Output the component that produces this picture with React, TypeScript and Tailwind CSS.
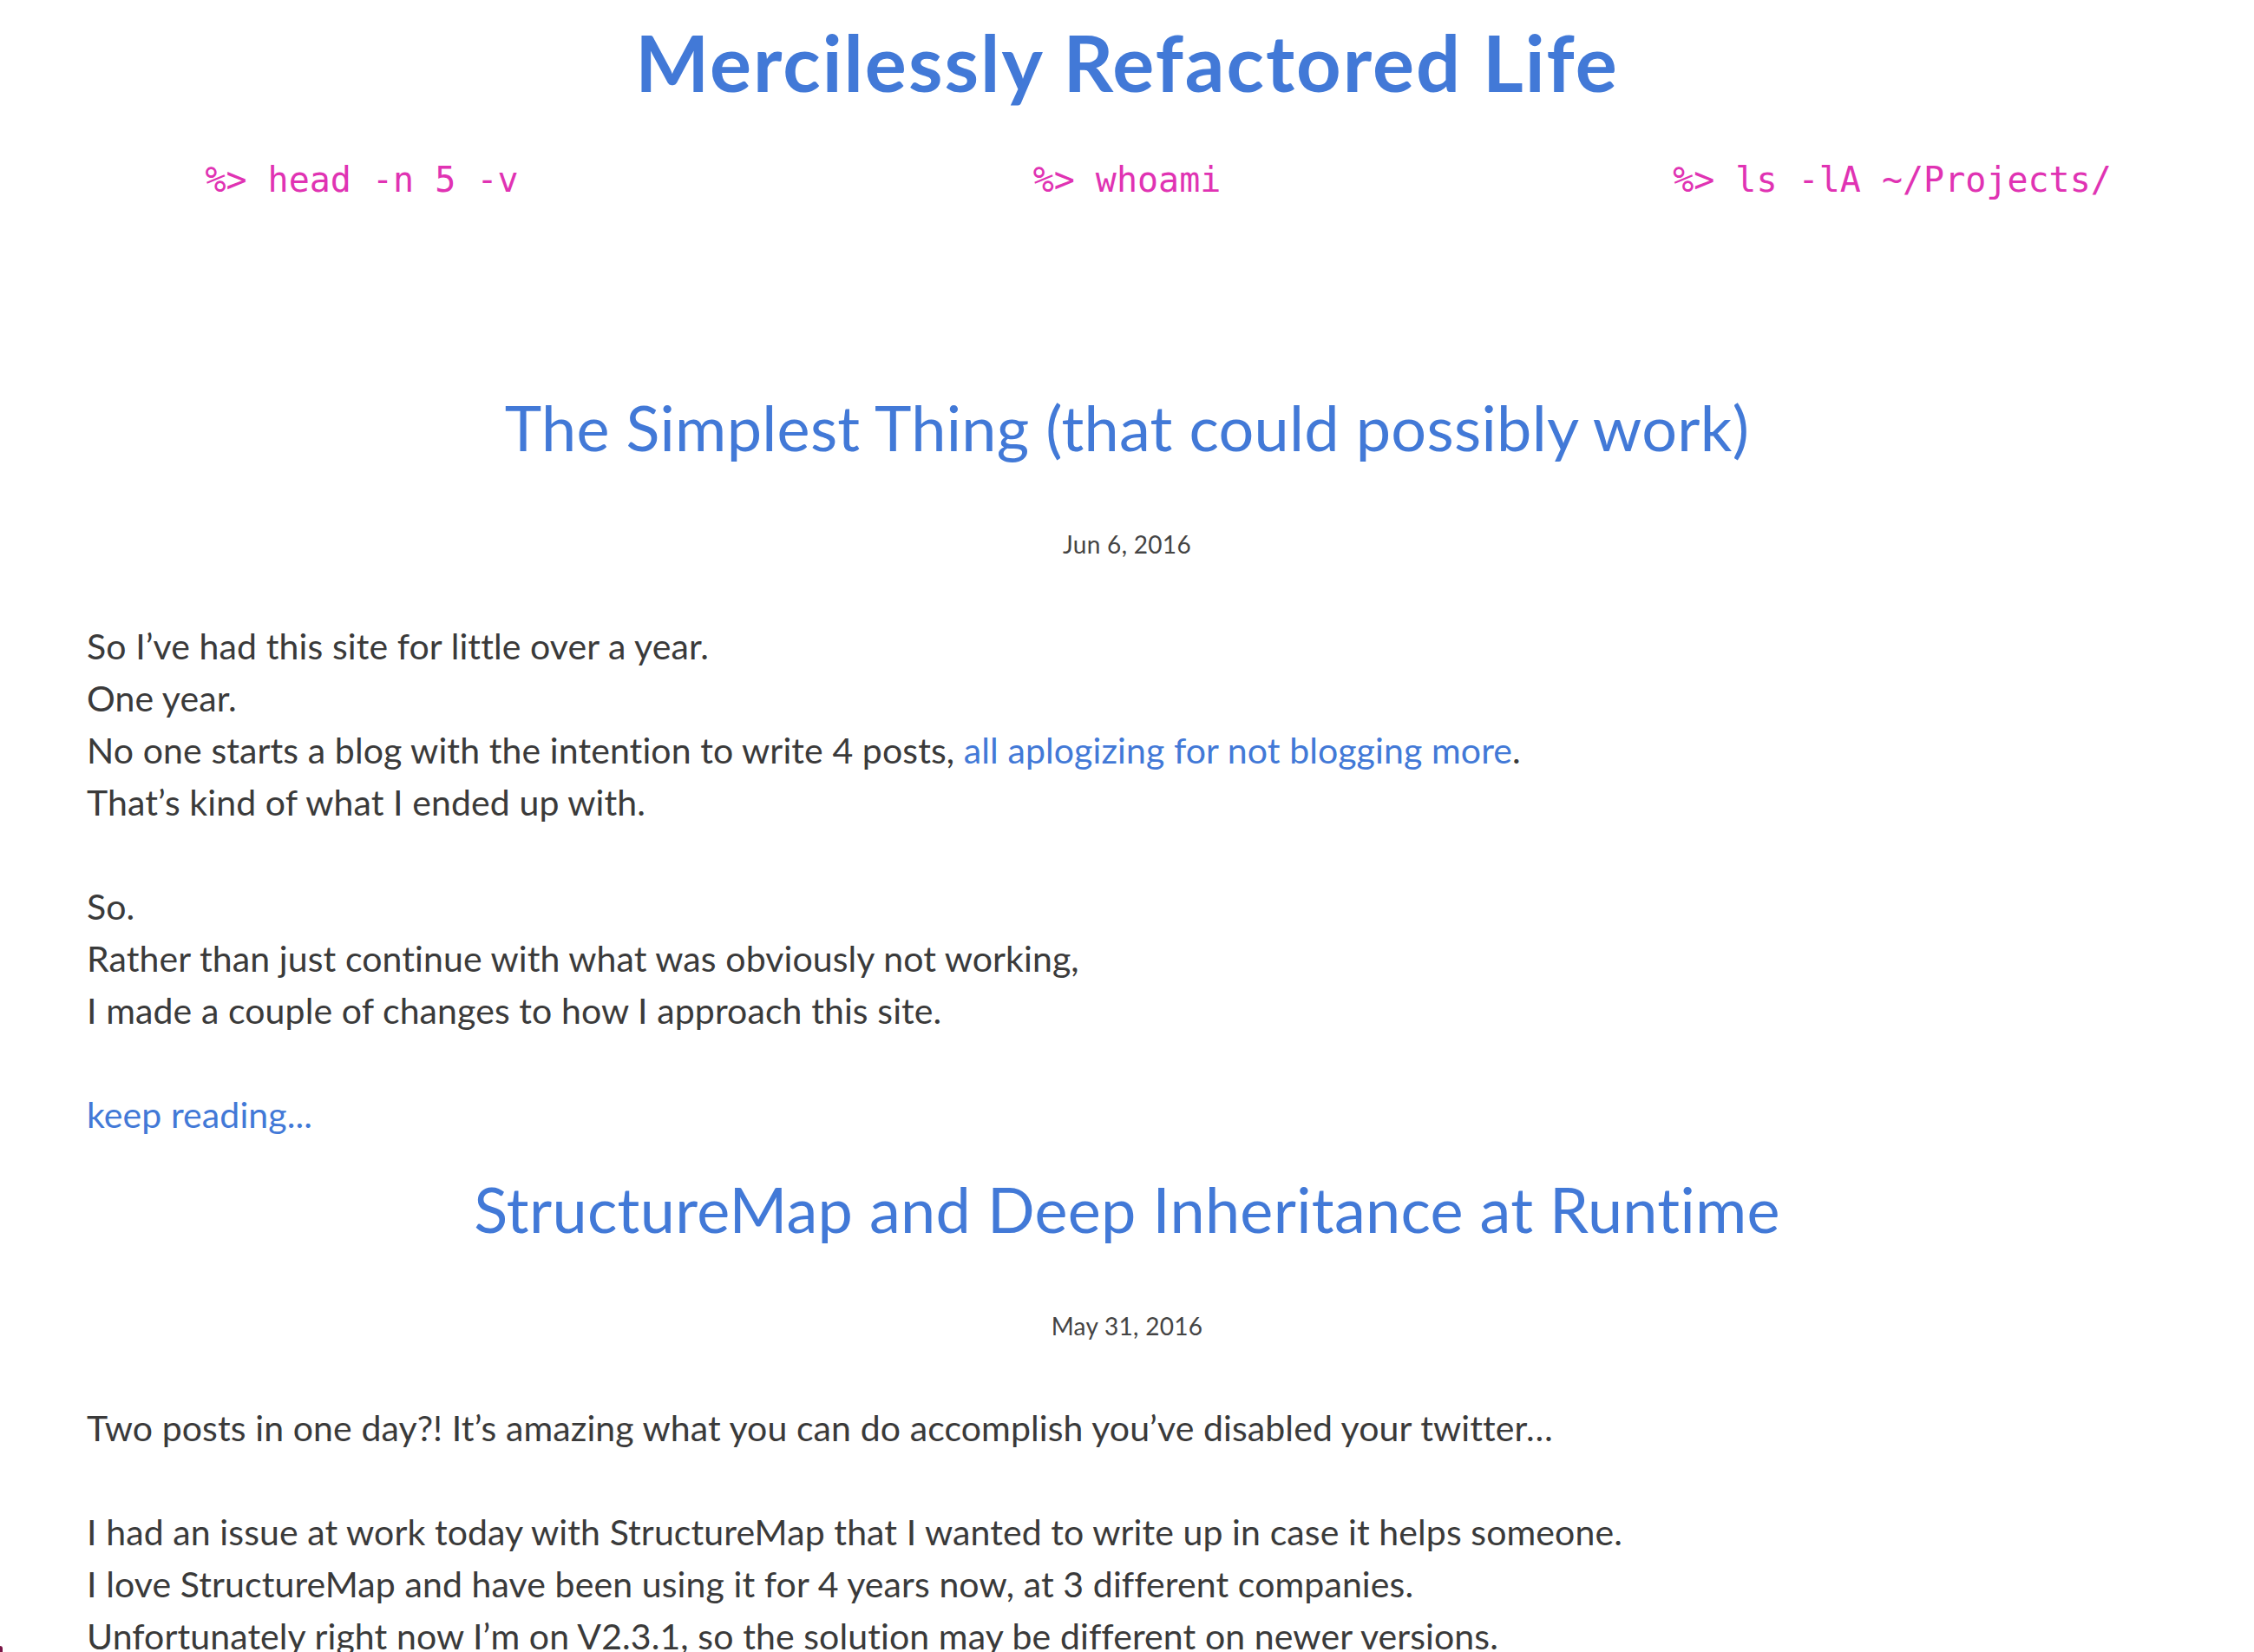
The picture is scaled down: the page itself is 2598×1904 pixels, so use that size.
import React from 'react';

const navItems = ['%> head -n 5 -v', '%> whoami', '%> ls -lA ~/Projects/'];

type Post = {
  title: string;
  date: string;
  paragraphs: React.ReactNode[][];
  more?: boolean;
};

const posts: Post[] = [
  {
    title: 'The Simplest Thing (that could possibly work)',
    date: 'Jun 6, 2016',
    paragraphs: [
      [
        'So I’ve had this site for little over a year.',
        'One year.',
        <>
          No one starts a blog with the intention to write 4 posts,{' '}
          <a href="#" className="text-[#4279d7]">all aplogizing for not blogging more</a>.
        </>,
        'That’s kind of what I ended up with.',
      ],
      [
        'So.',
        'Rather than just continue with what was obviously not working,',
        'I made a couple of changes to how I approach this site.',
      ],
    ],
    more: true,
  },
  {
    title: 'StructureMap and Deep Inheritance at Runtime',
    date: 'May 31, 2016',
    paragraphs: [
      ['Two posts in one day?! It’s amazing what you can do accomplish you’ve disabled your twitter…'],
      [
        'I had an issue at work today with StructureMap that I wanted to write up in case it helps someone.',
        'I love StructureMap and have been using it for 4 years now, at 3 different companies.',
        'Unfortunately right now I’m on V2.3.1, so the solution may be different on newer versions.',
      ],
    ],
  },
];

function PostSummary({ post }: { post: Post }) {
  return (
    <article className="mb-[38px]">
      <h2 className="text-center text-[72px] leading-[80px] font-normal tracking-[0.3px] text-[#4279d7]">{post.title}</h2>
      <p className="mt-[75px] text-center text-[28px] leading-[40px] tracking-[0.3px] text-[#444]">{post.date}</p>
      <div className="mt-[68px] px-[100px] text-[41px] leading-[60px] tracking-[0.1px] text-[#3a3a3a]">
        {post.paragraphs.map((lines, i) => (
          <p key={i} className="mb-[60px]">
            {lines.map((line, j) => (
              <React.Fragment key={j}>
                {line}
                {j < lines.length - 1 && <br />}
              </React.Fragment>
            ))}
          </p>
        ))}
        {post.more && (
          <a href="#" className="text-[#4279d7]">keep reading...</a>
        )}
      </div>
    </article>
  );
}

export default function App() {
  return (
    <div className="min-h-screen overflow-hidden bg-white font-['Lato','Open_Sans',sans-serif]">
      {/* Header */}
      <header>
        <h1 className="mt-[26px] text-center text-[90px] leading-[90px] font-bold tracking-[2px] text-[#4279d7]">
          Mercilessly Refactored Life
        </h1>
        <nav className="mt-[67px] flex justify-center">
          {navItems.map(item => (
            <a
              key={item}
              href="#"
              className="w-[882px] shrink-0 text-center font-['DejaVu_Sans_Mono',monospace] text-[40px] leading-[48px] text-[#e033b3] whitespace-pre"
            >
              {item}
            </a>
          ))}
        </nav>
      </header>

      {/* Posts */}
      <main className="mt-[221px]">
        {posts.map(post => (
          <PostSummary key={post.title} post={post} />
        ))}
      </main>

      {/* corner of a fixed badge peeking in */}
      <div className="fixed bottom-0 left-0 h-[7px] w-[3px] rounded-tr-full bg-[#7a1446]" />
    </div>
  );
}
